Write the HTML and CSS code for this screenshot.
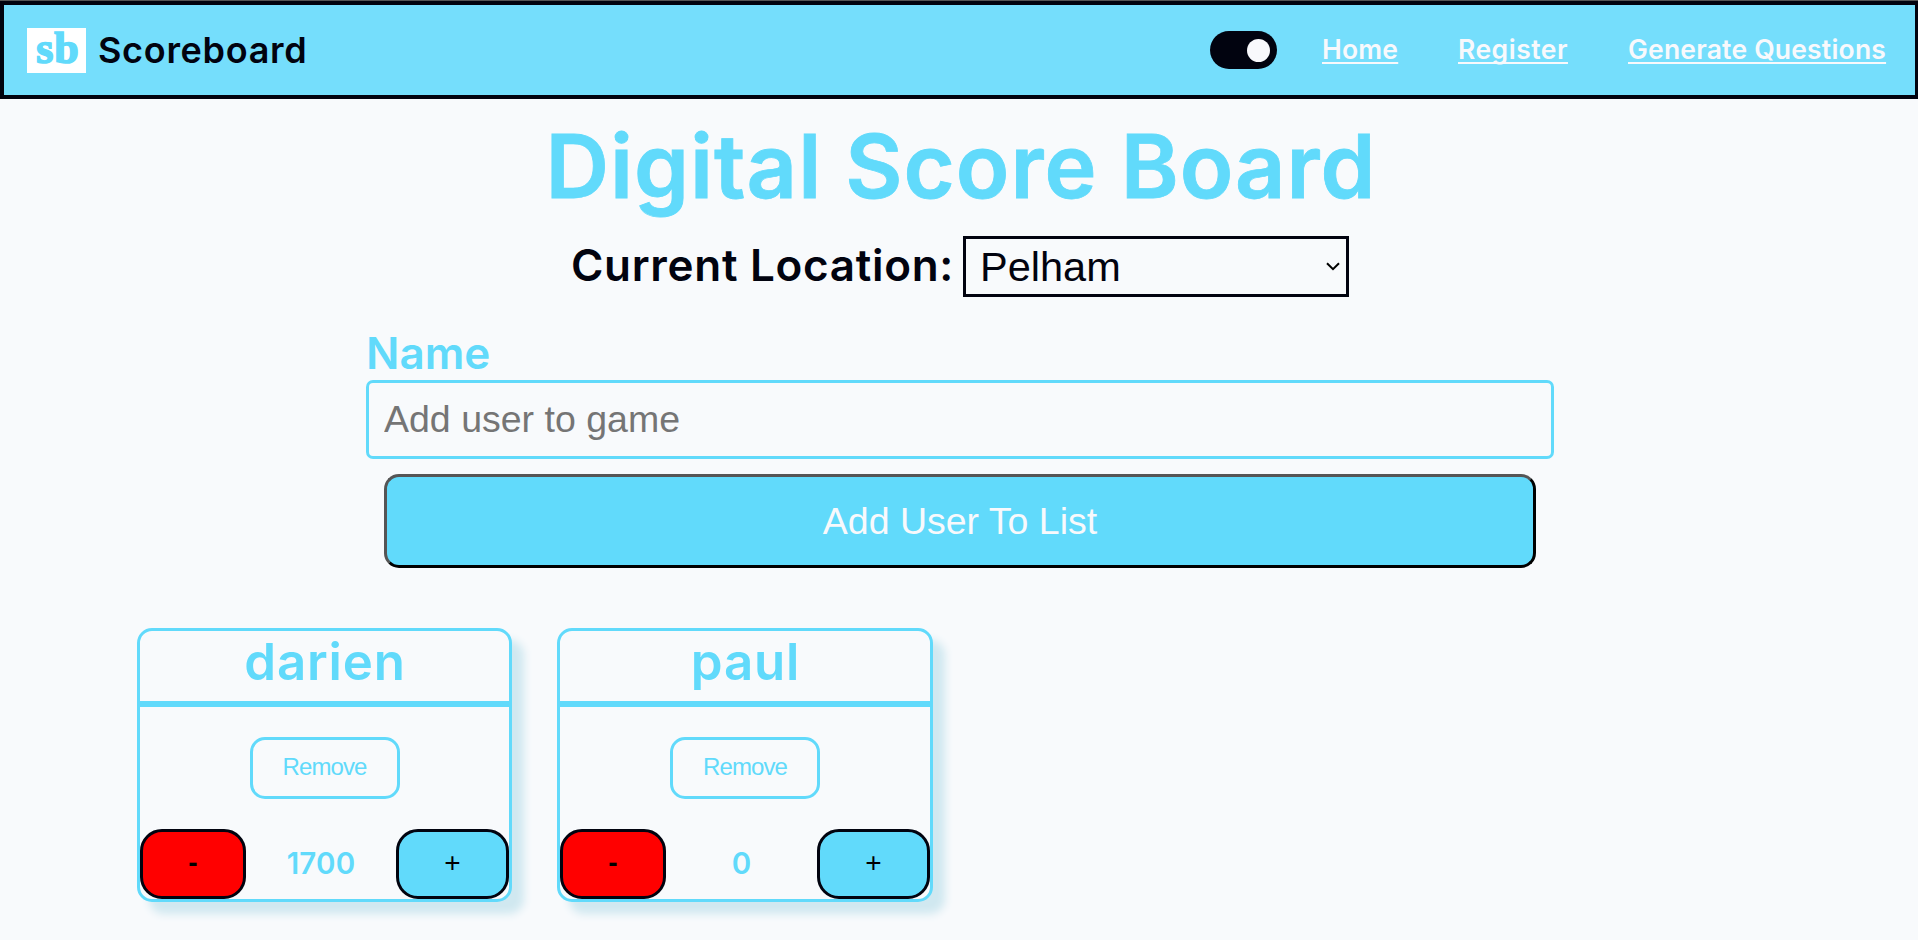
FILE: index.html
```html
<!DOCTYPE html>
<html lang="en">
<head>
<meta charset="utf-8">
<title>Scoreboard</title>
<link rel="stylesheet" href="styles.css">
</head>
<body>
<header class="navbar">
  <div class="brand"><span class="logo">sb</span><span class="brand-name">Scoreboard</span></div>
  <nav class="nav">
    <button class="toggle" aria-label="Theme"><span class="knob"></span></button>
    <a class="link home" href="#">Home</a>
    <a class="link register" href="#">Register</a>
    <a class="link generate" href="#">Generate Questions</a>
  </nav>
</header>
<main>
  <h1 class="title">Digital Score Board</h1>
  <div class="location">
    <span class="location-label">Current Location:</span>
    <div class="select"><span>Pelham</span>
      <svg class="chevron" width="14" height="9" viewBox="0 0 14 9"><path d="M1 1.2 7 7.2 13 1.2" fill="none" stroke="#000" stroke-width="2"/></svg>
    </div>
  </div>
  <form class="form">
    <label class="label" for="user">Name</label>
    <input class="input" id="user" placeholder="Add user to game">
    <button class="add" type="button">Add User To List</button>
  </form>
  <section class="cards">
    <article class="card">
      <h2 class="player">darien</h2>
      <button class="remove">Remove</button>
      <div class="score-row"><button class="score-btn minus">-</button><span class="score">1700</span><button class="score-btn plus">+</button></div>
    </article>
    <article class="card wide">
      <h2 class="player">paul</h2>
      <button class="remove">Remove</button>
      <div class="score-row"><button class="score-btn minus">-</button><span class="score">0</span><button class="score-btn plus">+</button></div>
    </article>
  </section>
</main>
</body>
</html>
```
FILE: styles.css
```css
* { box-sizing: border-box; }
body {
  margin: 0;
  height: 940px;
  overflow: hidden;
  background: #f8fafc;
  color: #01030f;
  font-family: Inter, Roboto, sans-serif;
  font-weight: 600;
}
button, input { font-family: "Liberation Sans", Arial, sans-serif; margin: 0; }
.navbar {
  height: 99px;
  border: 4px solid #01030f;
  border-right-width: 3px;
  border-top-width: 5px;
  background: #75defc;
  display: flex;
  justify-content: space-between;
  align-items: center;
  padding: 0 29px 0 23px;
  position: relative;
}
.navbar::before {
  content: "";
  position: absolute;
  left: -4px;
  right: -3px;
  top: -5px;
  height: 1px;
  background: #555;
}
.brand { display: flex; align-items: center; }
.logo {
  width: 59px;
  height: 45px;
  background: #fff;
  color: #61dafb;
  font: bold 44px/41px "Liberation Serif", serif;
  text-align: center;
  padding-left: 3px;
  letter-spacing: 1px;
  -webkit-text-stroke: 1.6px #61dafb;
}
.brand-name { margin-left: 12px; font-size: 36px; line-height: 42px; letter-spacing: .7px; padding-bottom: 1px; }
.nav { display: flex; align-items: center; }
.toggle {
  width: 67px;
  height: 38px;
  border: 0;
  border-radius: 19px;
  background: #01030f;
  padding: 0 7px;
  display: flex;
  align-items: center;
  justify-content: flex-end;
  margin-right: 45px;
}
.knob { width: 23px; height: 23px; border-radius: 50%; background: #f8f9fc; }
.link {
  color: #f8f9fc;
  font-size: 26.5px;
  line-height: 34px;
  padding-bottom: 2px;
  white-space: nowrap;
  text-decoration-thickness: 2px;
  text-underline-offset: 3px;
  text-decoration-skip-ink: none;
  letter-spacing: .2px;
}
.home { width: 76px; margin-right: 60px; }
.register { width: 110px; margin-right: 60px; letter-spacing: .5px; }
.generate { width: 258px; }
.title {
  margin: 15px 0 0;
  padding-left: 4px;
  text-align: center;
  font-size: 88px;
  line-height: 105px;
  font-weight: 600;
  color: #61dafb;
  letter-spacing: 1px;
  -webkit-text-stroke: .8px #61dafb;
}
.location { display: flex; margin: 17px 0 0 571px; height: 61px; align-items: center; }
.location-label { width: 392px; font-size: 44px; white-space: nowrap; line-height: 59px; padding-bottom: 2px; letter-spacing: .7px; }
.select {
  width: 386px;
  height: 61px;
  border: 3px solid #01030f;
  padding: 0 6px 0 14px;
  display: flex;
  align-items: center;
  justify-content: space-between;
  font: 400 41.5px/55px "Liberation Sans", Arial, sans-serif;
}
.form { margin: 30px 364px 0 366px; display: flex; flex-direction: column; }
.label { color: #61dafb; font-size: 44px; line-height: 53px; }
.input {
  height: 79px;
  border: 3px solid #61dafb;
  border-radius: 7px;
  background: transparent;
  padding: 0 15px 0;
  font-size: 37.5px;
}
.input::placeholder { color: #757575; }
.add {
  height: 94px;
  margin: 15px 18px 0;
  border: 3px solid;
  border-color: #555 #000 #000 #555;
  border-radius: 15px;
  background: #61dafb;
  color: #f8f9fc;
  font-size: 37.5px;
}
.cards { display: flex; gap: 45px; margin: 60px 0 0 137px; }
.card {
  width: 375px;
  height: 274px;
  border: 3px solid #61dafb;
  border-radius: 15px;
  box-shadow: 12px 12px 8px #d0e8f0;
  background: #f8fafc;
  display: flex;
  flex-direction: column;
  align-items: center;
}
.card.wide { width: 376px; }
.player {
  align-self: stretch;
  height: 76px;
  margin: 0;
  border-bottom: 6px solid #61dafb;
  text-align: center;
  font-size: 51px;
  line-height: 61px;
  font-weight: 600;
  color: #61dafb;
  letter-spacing: .8px;
  padding-left: 1px;
}
.remove {
  width: 150px;
  height: 62px;
  margin-top: 30px;
  border: 3px solid #61dafb;
  border-radius: 15px;
  background: transparent;
  color: #61dafb;
  font-size: 24px;
  letter-spacing: -.9px;
  padding: 0 0 2px;
}
.score-row { align-self: stretch; display: flex; align-items: center; margin-top: 30px; height: 70px; }
.score-btn {
  height: 70px;
  border: 3px solid #01030f;
  border-radius: 22px;
  color: #000;
  font-size: 28px;
  padding: 0 0 2px;
}
.minus { width: 106px; background: #f00; font-weight: 700; }
.plus { width: 113px; background: #61dafb; }
.score { flex: 1; text-align: center; color: #61dafb; font-size: 29.5px; line-height: 34px; padding-bottom: 2px; letter-spacing: .2px; }
```
